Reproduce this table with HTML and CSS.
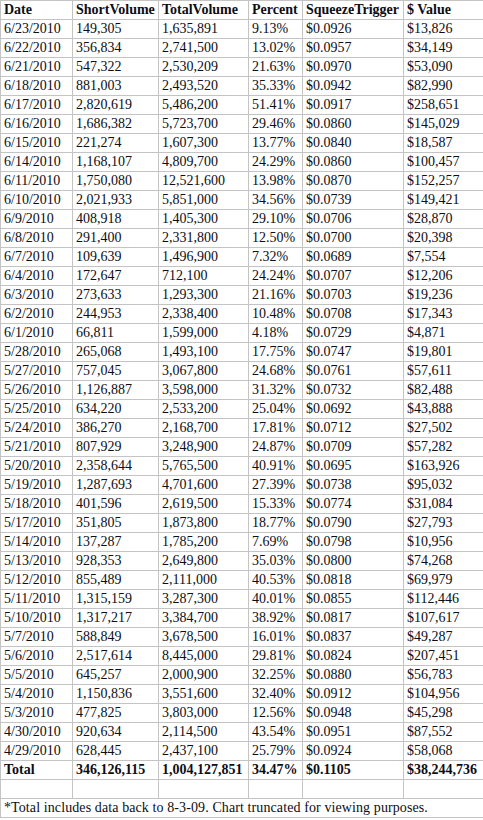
FILE: index.html
```html
<!DOCTYPE html>
<html>
<head>
<meta charset="utf-8">
<link rel="stylesheet" href="styles.css">
</head>
<body>
<table class="grid">
<colgroup>
<col class="c-date"><col class="c-short"><col class="c-total"><col class="c-pct"><col class="c-sq"><col class="c-val">
</colgroup>
<thead>
<tr class="head"><th>Date</th><th>ShortVolume</th><th>TotalVolume</th><th>Percent</th><th>SqueezeTrigger</th><th>$ Value</th></tr>
</thead>
<tbody>
<tr><td>6/23/2010</td><td>149,305</td><td>1,635,891</td><td>9.13%</td><td>$0.0926</td><td>$13,826</td></tr>
<tr><td>6/22/2010</td><td>356,834</td><td>2,741,500</td><td>13.02%</td><td>$0.0957</td><td>$34,149</td></tr>
<tr><td>6/21/2010</td><td>547,322</td><td>2,530,209</td><td>21.63%</td><td>$0.0970</td><td>$53,090</td></tr>
<tr><td>6/18/2010</td><td>881,003</td><td>2,493,520</td><td>35.33%</td><td>$0.0942</td><td>$82,990</td></tr>
<tr><td>6/17/2010</td><td>2,820,619</td><td>5,486,200</td><td>51.41%</td><td>$0.0917</td><td>$258,651</td></tr>
<tr><td>6/16/2010</td><td>1,686,382</td><td>5,723,700</td><td>29.46%</td><td>$0.0860</td><td>$145,029</td></tr>
<tr><td>6/15/2010</td><td>221,274</td><td>1,607,300</td><td>13.77%</td><td>$0.0840</td><td>$18,587</td></tr>
<tr><td>6/14/2010</td><td>1,168,107</td><td>4,809,700</td><td>24.29%</td><td>$0.0860</td><td>$100,457</td></tr>
<tr><td>6/11/2010</td><td>1,750,080</td><td>12,521,600</td><td>13.98%</td><td>$0.0870</td><td>$152,257</td></tr>
<tr><td>6/10/2010</td><td>2,021,933</td><td>5,851,000</td><td>34.56%</td><td>$0.0739</td><td>$149,421</td></tr>
<tr><td>6/9/2010</td><td>408,918</td><td>1,405,300</td><td>29.10%</td><td>$0.0706</td><td>$28,870</td></tr>
<tr><td>6/8/2010</td><td>291,400</td><td>2,331,800</td><td>12.50%</td><td>$0.0700</td><td>$20,398</td></tr>
<tr><td>6/7/2010</td><td>109,639</td><td>1,496,900</td><td>7.32%</td><td>$0.0689</td><td>$7,554</td></tr>
<tr><td>6/4/2010</td><td>172,647</td><td>712,100</td><td>24.24%</td><td>$0.0707</td><td>$12,206</td></tr>
<tr><td>6/3/2010</td><td>273,633</td><td>1,293,300</td><td>21.16%</td><td>$0.0703</td><td>$19,236</td></tr>
<tr><td>6/2/2010</td><td>244,953</td><td>2,338,400</td><td>10.48%</td><td>$0.0708</td><td>$17,343</td></tr>
<tr><td>6/1/2010</td><td>66,811</td><td>1,599,000</td><td>4.18%</td><td>$0.0729</td><td>$4,871</td></tr>
<tr><td>5/28/2010</td><td>265,068</td><td>1,493,100</td><td>17.75%</td><td>$0.0747</td><td>$19,801</td></tr>
<tr><td>5/27/2010</td><td>757,045</td><td>3,067,800</td><td>24.68%</td><td>$0.0761</td><td>$57,611</td></tr>
<tr><td>5/26/2010</td><td>1,126,887</td><td>3,598,000</td><td>31.32%</td><td>$0.0732</td><td>$82,488</td></tr>
<tr><td>5/25/2010</td><td>634,220</td><td>2,533,200</td><td>25.04%</td><td>$0.0692</td><td>$43,888</td></tr>
<tr><td>5/24/2010</td><td>386,270</td><td>2,168,700</td><td>17.81%</td><td>$0.0712</td><td>$27,502</td></tr>
<tr><td>5/21/2010</td><td>807,929</td><td>3,248,900</td><td>24.87%</td><td>$0.0709</td><td>$57,282</td></tr>
<tr><td>5/20/2010</td><td>2,358,644</td><td>5,765,500</td><td>40.91%</td><td>$0.0695</td><td>$163,926</td></tr>
<tr><td>5/19/2010</td><td>1,287,693</td><td>4,701,600</td><td>27.39%</td><td>$0.0738</td><td>$95,032</td></tr>
<tr><td>5/18/2010</td><td>401,596</td><td>2,619,500</td><td>15.33%</td><td>$0.0774</td><td>$31,084</td></tr>
<tr><td>5/17/2010</td><td>351,805</td><td>1,873,800</td><td>18.77%</td><td>$0.0790</td><td>$27,793</td></tr>
<tr><td>5/14/2010</td><td>137,287</td><td>1,785,200</td><td>7.69%</td><td>$0.0798</td><td>$10,956</td></tr>
<tr><td>5/13/2010</td><td>928,353</td><td>2,649,800</td><td>35.03%</td><td>$0.0800</td><td>$74,268</td></tr>
<tr><td>5/12/2010</td><td>855,489</td><td>2,111,000</td><td>40.53%</td><td>$0.0818</td><td>$69,979</td></tr>
<tr><td>5/11/2010</td><td>1,315,159</td><td>3,287,300</td><td>40.01%</td><td>$0.0855</td><td>$112,446</td></tr>
<tr><td>5/10/2010</td><td>1,317,217</td><td>3,384,700</td><td>38.92%</td><td>$0.0817</td><td>$107,617</td></tr>
<tr><td>5/7/2010</td><td>588,849</td><td>3,678,500</td><td>16.01%</td><td>$0.0837</td><td>$49,287</td></tr>
<tr><td>5/6/2010</td><td>2,517,614</td><td>8,445,000</td><td>29.81%</td><td>$0.0824</td><td>$207,451</td></tr>
<tr><td>5/5/2010</td><td>645,257</td><td>2,000,900</td><td>32.25%</td><td>$0.0880</td><td>$56,783</td></tr>
<tr><td>5/4/2010</td><td>1,150,836</td><td>3,551,600</td><td>32.40%</td><td>$0.0912</td><td>$104,956</td></tr>
<tr><td>5/3/2010</td><td>477,825</td><td>3,803,000</td><td>12.56%</td><td>$0.0948</td><td>$45,298</td></tr>
<tr><td>4/30/2010</td><td>920,634</td><td>2,114,500</td><td>43.54%</td><td>$0.0951</td><td>$87,552</td></tr>
<tr><td>4/29/2010</td><td>628,445</td><td>2,437,100</td><td>25.79%</td><td>$0.0924</td><td>$58,068</td></tr>
<tr class="total"><td>Total</td><td>346,126,115</td><td>1,004,127,851</td><td>34.47%</td><td>$0.1105</td><td>$38,244,736</td></tr>
<tr class="blank"><td></td><td></td><td></td><td></td><td></td><td></td></tr>
<tr><td class="note" colspan="6">*Total includes data back to 8-3-09. Chart truncated for viewing purposes.</td></tr>
</tbody>
</table>
</body>
</html>
```

FILE: styles.css
```css
html, body {
  margin: 0;
  padding: 0;
  background: #ffffff;
}

.grid {
  border-collapse: collapse;
  table-layout: fixed;
  width: 483px;
  font-family: "Liberation Serif", "Times New Roman", serif;
  font-size: 14px;
  color: #0d0d14;
}

.c-date { width: 72px; }
.c-short { width: 86px; }
.c-total { width: 90px; }
.c-pct { width: 54px; }
.c-sq { width: 101px; }
.c-val { width: 80px; }

.grid th,
.grid td {
  border: 1px solid #c4c4c4;
  padding: 0 3px;
  height: 18px;
  line-height: 18px;
  text-align: left;
  white-space: nowrap;
  overflow: visible;
  vertical-align: middle;
}

.grid th {
  font-weight: bold;
}

.total td {
  font-weight: bold;
}

.grid .note {
  font-weight: normal;
  letter-spacing: 0.1px;
}
```
